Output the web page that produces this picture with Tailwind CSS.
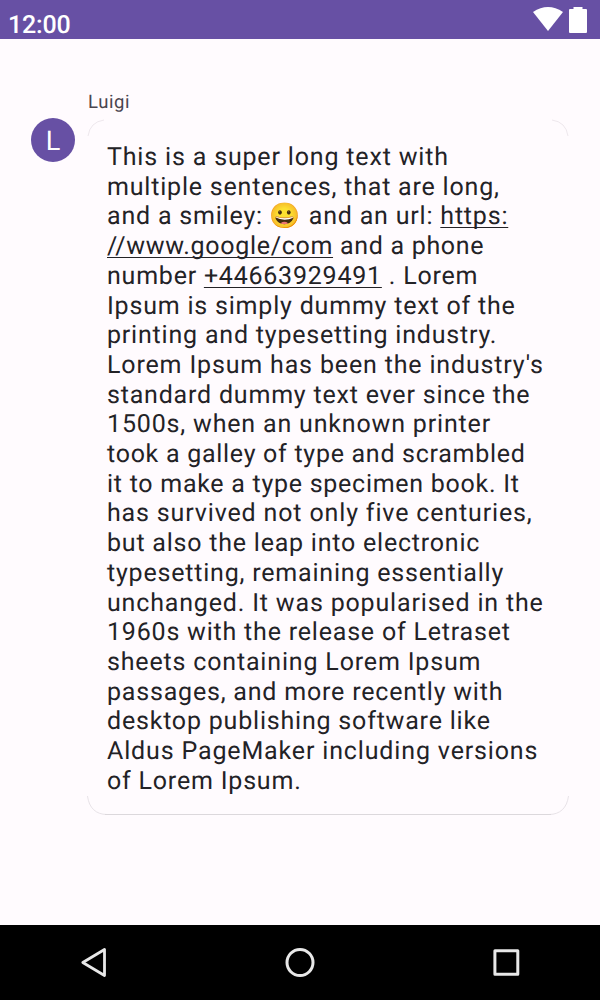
<!DOCTYPE html>
<html lang="en"><head><meta charset="utf-8"><title>Chat message</title><script src="https://cdn.jsdelivr.net/npm/@tailwindcss/browser@4"></script></head>
<body class="w-[600px] h-[1000px] overflow-hidden bg-[#fffbfe] font-['Roboto',sans-serif] text-[#232226] flex flex-col [text-rendering:geometricPrecision]">
<header class="h-[39px] shrink-0 bg-[#6750a4] text-white flex justify-between pl-2 pr-[13px]">
<span class="text-[25px] leading-[51px] font-medium tracking-[-0.15px]">12:00</span>
<div class="flex gap-1.5 pt-[7px]">
<svg width="30" height="26" viewBox="0 0 30 26" fill="#fff"><path d="M0 5Q15 -5 30 5L15 24Z"/></svg>
<svg width="18" height="26" viewBox="0 0 18 26" fill="#fff"><path d="M4.500 0H13.500V2H17Q18 2 18 3V25Q18 26 17 26H1Q0 26 0 25V3Q0 2 1 2H4.500Z"/></svg>
</div></header>
<main class="flex-1 pl-[31px] pr-[31px] pt-[51px]">
<div class="pl-[57px] h-[28px] text-[18.500px] leading-[24px] tracking-[0.6px] text-[#49454f]">Luigi</div>
<div class="flex gap-3">
<div class="size-[44px] rounded-full bg-[#6750a4] text-white text-[27px] leading-[46px] text-center shrink-0">L</div>
<div class="relative flex-1 h-[697px] pl-5 pt-[25px] text-[25px] leading-[29.700px] tracking-[0.8px] whitespace-nowrap">
<svg class="absolute left-0 top-0 w-[482px] h-[698px]" viewBox="0 0 482 698" fill="none"><path d="M1 18Q3 4 17 2M465 2Q479 4 481 18" stroke="#eee8ed"/><path d="M.5 678C2 690 9 696.500 20 696.500M462 696.500C473 696.500 480 690 481.500 678" stroke="#e8e3e8"/><path d="M18 696.500H464" stroke="#dcd8dc" stroke-width="1.200"/></svg>
<div class="tracking-[0.83px]">This is a super long text with</div><div>multiple sentences, that are long,</div><div>and a smiley: 😀 and an url: <span class="underline decoration-1 underline-offset-[3px] [text-decoration-skip-ink:none]">https:</span></div><div class="tracking-[0.7px]"><span class="underline decoration-1 underline-offset-[3px] [text-decoration-skip-ink:none]">//www.google/com</span> and a phone</div><div class="tracking-[0.77px]">number <span class="underline decoration-1 underline-offset-[3px] [text-decoration-skip-ink:none]">+44663929491</span> . Lorem</div><div>Ipsum is simply dummy text of the</div><div>printing and typesetting industry.</div><div class="tracking-[0.84px]">Lorem Ipsum has been the industry's</div><div>standard dummy text ever since the</div><div class="tracking-[0.83px]">1500s, when an unknown printer</div><div class="tracking-[0.72px]">took a galley of type and scrambled</div><div class="tracking-[0.73px]">it to make a type specimen book. It</div><div class="tracking-[0.85px]">has survived not only five centuries,</div><div class="tracking-[0.78px]">but also the leap into electronic</div><div>typesetting, remaining essentially</div><div class="tracking-[0.83px]">unchanged. It was popularised in the</div><div>1960s with the release of Letraset</div><div class="tracking-[0.83px]">sheets containing Lorem Ipsum</div><div>passages, and more recently with</div><div>desktop publishing software like</div><div class="tracking-[0.85px]">Aldus PageMaker including versions</div><div>of Lorem Ipsum.</div>
</div></div></main>
<nav class="h-[75px] shrink-0 bg-black flex items-center justify-between pl-[78px] pr-[78px]">
<svg width="32" height="32" viewBox="0 0 32 32" fill="none" stroke="#e8e8e8" stroke-width="2.800" stroke-linejoin="round"><path d="M4.800 15.500L26.500 2.500V28.500Z"/></svg>
<svg width="32" height="32" viewBox="0 0 32 32" fill="none" stroke="#e8e8e8" stroke-width="3"><circle cx="16" cy="15.500" r="13"/></svg>
<svg width="32" height="32" viewBox="0 0 32 32" fill="none" stroke="#e8e8e8" stroke-width="3" stroke-linejoin="round"><path d="M4.900 3.800H27.800V27.300H4.900Z"/></svg>
</nav>
</body></html>
